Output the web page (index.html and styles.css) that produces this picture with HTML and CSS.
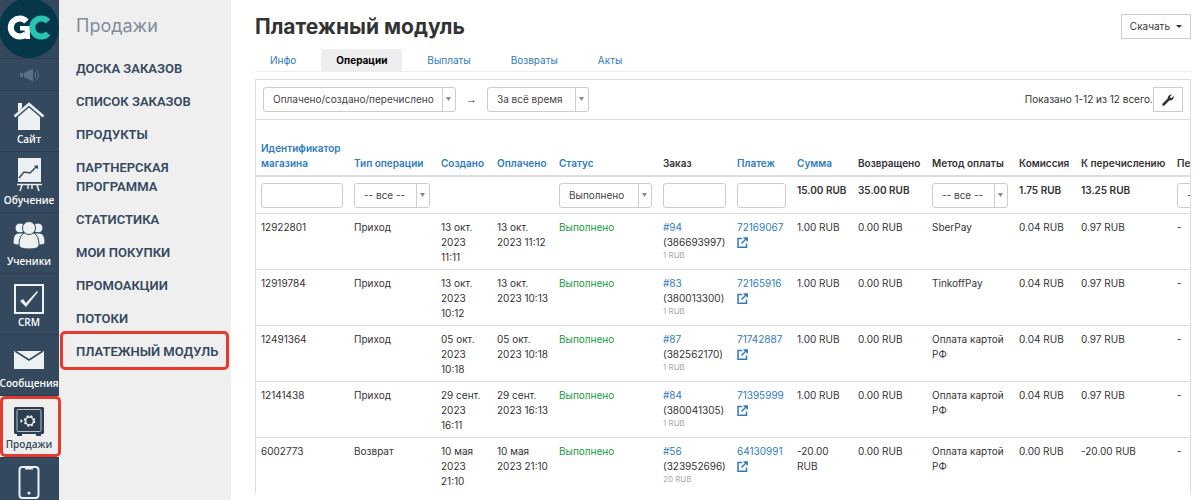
FILE: index.html
```html
<!DOCTYPE html>
<html lang="ru">
<head>
  <meta charset="UTF-8" />
  <meta name="viewport" content="width=device-width, initial-scale=1" />
  <title>Платежный модуль</title>
  <link rel="stylesheet" href="styles.css">
</head>
<body>

  <!-- Left icon bar -->
  <nav class="rail">
    <a href="#" class="rail-logo" aria-label="GC">
      <svg width="59" height="58" viewBox="0 0 59 58" fill="none">
        <circle cx="29" cy="28" r="30" fill="#053649" />
        <path d="M26.500 21.500A9 9 0 1 0 26 34" stroke="#fff" stroke-width="6" />
        <path d="M20 26h10v13h-4.500l-1-8.500H20z" fill="#fff" />
        <path d="M48 21.500A9 9 0 1 0 48 33.500" stroke="#27c4b5" stroke-width="6" />
      </svg>
    </a>
    <a href="#" class="rail-news" aria-label="Новости">
      <svg width="20" height="14" viewBox="0 0 20 14" fill="#5a6f87">
        <path d="M0 5h3v4H0zM4 5l9-4.500v13L4 9z" />
        <path d="M15 4q1.500 3 0 6M17 2q3 5 0 10" fill="none" stroke="#5a6f87" />
      </svg>
    </a>
    <a href="#" class="rail-item">
      <svg width="32" height="30" viewBox="0 0 32 30" fill="#ecf0f1">
        <path d="M5 2h4v5l-4 4z" />
        <path d="M1.500 15.500L16 3l14.500 12.500" fill="none" stroke="#ecf0f1" stroke-width="2.500" />
        <path d="M5 16L16 6.500 27 16v13H5z" />
      </svg>
      <span>Сайт</span>
    </a>
    <a href="#" class="rail-item">
      <svg width="26" height="34" viewBox="0 0 26 34">
        <path d="M2 0h23v24H2z" fill="#ecf0f1" />
        <path d="M3 20l5-6 6 1 7-7" fill="none" stroke="#34495e" stroke-width="1.500" />
        <path d="M18 7.500h4v4z" fill="#34495e" />
        <path d="M1 26.500h25M6 27l-2 6M12 27v4M16 27v4M21 27l2 6" fill="none" stroke="#ecf0f1" stroke-width="1.500" />
      </svg>
      <span>Обучение</span>
    </a>
    <a href="#" class="rail-item">
      <svg width="32" height="32" viewBox="0 0 32 32" fill="#ecf0f1" stroke="#34495e">
        <circle cx="7" cy="7" r="5" />
        <circle cx="25" cy="7" r="5" />
        <path d="M0 21q0-8 5-9h6v12H5q-5 0-5-3zM32 21q0-8-5-9h-6v12h6q5 0 5-3z" />
        <path d="M6 24q0-9 5-12h10q5 3 5 12 0 4-10 4T6 24z" />
        <circle cx="16" cy="7" r="6.500" />
      </svg>
      <span>Ученики</span>
    </a>
    <a href="#" class="rail-item">
      <svg width="30" height="30" viewBox="0 0 30 30" fill="none" stroke="#ecf0f1">
        <path d="M1 1h28v28H1z" stroke-width="2" />
        <path d="M6 17l3-2 3 4 11-12 1 1-12 15z" fill="#ecf0f1" stroke="none" />
      </svg>
      <span>CRM</span>
    </a>
    <a href="#" class="rail-item">
      <svg width="30" height="28" viewBox="0 0 30 28" fill="#ecf0f1">
        <path d="M0 4h30v18H0z" />
        <path d="M1 4l14 9 14-9" fill="none" stroke="#34495e" stroke-width="1.500" />
      </svg>
      <span>Сообщения</span>
    </a>
    <a href="#" class="rail-item active">
      <svg width="30" height="29" viewBox="0 0 30 29">
        <path d="M1 0h28l1 1v25l-1 1h-2v2h-5v-2H8v2H3v-2H1l-1-1V1z" fill="#2c3e50" />
        <rect x="3" y="2.500" width="24" height="22" rx="1" fill="none" stroke="#b5bdc5" />
        <circle cx="15.500" cy="14" r="4" fill="none" stroke="#ecf0f1" stroke-width="1.500" />
        <circle cx="15.500" cy="14" r="5" fill="none" stroke="#ecf0f1" stroke-width="1.500" stroke-dasharray="2 2" />
        <path d="M6.500 12l2.500 2-2.500 2z" fill="#ecf0f1" />
      </svg>
      <span>Продажи</span>
    </a>
    <a href="#" class="rail-item rail-app" aria-label="Приложение">
      <svg width="22" height="34" viewBox="0 0 22 34" fill="none" stroke="#ecf0f1">
        <rect x="1.500" y="1" width="19" height="31" rx="3" stroke-width="2" />
        <path d="M7 2.500h8" stroke-width="2" />
        <circle cx="11" cy="27" r="1.500" fill="#ecf0f1" stroke="none" />
      </svg>
    </a>
  </nav>

  <!-- Section menu -->
  <aside class="submenu">
    <h2>Продажи</h2>
    <a href="#">ДОСКА ЗАКАЗОВ</a>
    <a href="#">СПИСОК ЗАКАЗОВ</a>
    <a href="#">ПРОДУКТЫ</a>
    <a href="#">ПАРТНЕРСКАЯ ПРОГРАММА</a>
    <a href="#">СТАТИСТИКА</a>
    <a href="#">МОИ ПОКУПКИ</a>
    <a href="#">ПРОМОАКЦИИ</a>
    <a href="#">ПОТОКИ</a>
    <a href="#" class="active">ПЛАТЕЖНЫЙ МОДУЛЬ</a>
  </aside>

  <main>
    <header class="page-header">
      <h1>Платежный модуль</h1>
      <button type="button" class="btn">Скачать <span class="caret"></span></button>
    </header>

    <nav class="tabs">
      <a href="#">Инфо</a>
      <a href="#" class="active">Операции</a>
      <a href="#">Выплаты</a>
      <a href="#">Возвраты</a>
      <a href="#">Акты</a>
    </nav>

    <section class="panel">
      <div class="toolbar">
        <select class="select-date" aria-label="Тип даты"><option>Оплачено/создано/перечислено</option></select>
        <span class="arrow">→</span>
        <select class="select-period" aria-label="Период"><option>За всё время</option></select>
        <span class="summary">Показано 1-12 из 12 всего.</span>
        <button type="button" class="btn btn-icon" aria-label="Настройки">
          <svg width="12" height="12" viewBox="0 0 12 12">
            <path d="M1.500 10.500L7 5" stroke="#333" stroke-width="2.500" stroke-linecap="round" />
            <path d="M10 .5L8 2.500l.3 1.300 1.300.3 2-2A3.500 3.500 0 0 1 6.500 6 3.500 3.500 0 0 1 10 .5z" fill="#333" />
          </svg>
        </button>
      </div>

      <div class="grid">
        <table>
          <colgroup>
            <col class="c-shop"><col class="c-type"><col class="c-created"><col class="c-paid">
            <col class="c-status"><col class="c-order"><col class="c-payment"><col class="c-sum">
            <col class="c-refund"><col class="c-method"><col class="c-fee"><col class="c-transfer"><col class="c-date">
          </colgroup>
          <thead>
            <tr>
              <th><a href="#">Идентификатор магазина</a></th>
              <th><a href="#">Тип операции</a></th>
              <th><a href="#">Создано</a></th>
              <th><a href="#">Оплачено</a></th>
              <th><a href="#">Статус</a></th>
              <th>Заказ</th>
              <th><a href="#">Платеж</a></th>
              <th><a href="#">Сумма</a></th>
              <th>Возвращено</th>
              <th>Метод оплаты</th>
              <th>Комиссия</th>
              <th>К перечислению</th>
              <th>Перечислено</th>
            </tr>
            <tr class="filters">
              <td><input type="text" aria-label="Идентификатор магазина"></td>
              <td><select aria-label="Тип операции"><option>-- все --</option></select></td>
              <td></td>
              <td></td>
              <td><select aria-label="Статус"><option>Выполнено</option></select></td>
              <td><input type="text" aria-label="Заказ"></td>
              <td><input type="text" aria-label="Платеж"></td>
              <td>15.00 RUB</td>
              <td>35.00 RUB</td>
              <td><select aria-label="Метод оплаты"><option>-- все --</option></select></td>
              <td>1.75 RUB</td>
              <td>13.25 RUB</td>
              <td><select aria-label="Перечислено"><option>-- все --</option></select></td>
            </tr>
          </thead>
          <tbody id="rows"></tbody>
        </table>
      </div>
    </section>
  </main>

  <script>
    // shop id, type, created, paid, order, order id, order sum, payment, sum, method, fee, transfer
    const operations = [
      ["12922801", "Приход", "13 окт. 2023 11:11", "13 окт. 2023 11:12", "#94", "386693997", "1 RUB", "72169067", "1.00 RUB", "SberPay", "0.04 RUB", "0.97 RUB"],
      ["12919784", "Приход", "13 окт. 2023 10:12", "13 окт. 2023 10:13", "#83", "380013300", "1 RUB", "72165916", "1.00 RUB", "TinkoffPay", "0.04 RUB", "0.97 RUB"],
      ["12491364", "Приход", "05 окт. 2023 10:18", "05 окт. 2023 10:18", "#87", "382562170", "1 RUB", "71742887", "1.00 RUB", "Оплата картой РФ", "0.04 RUB", "0.97 RUB"],
      ["12141438", "Приход", "29 сент. 2023 16:11", "29 сент. 2023 16:13", "#84", "380041305", "1 RUB", "71395999", "1.00 RUB", "Оплата картой РФ", "0.04 RUB", "0.97 RUB"],
      ["6002773", "Возврат", "10 мая 2023 21:10", "10 мая 2023 21:10", "#56", "323952696", "20 RUB", "64130991", "-20.00 RUB", "Оплата картой РФ", "0.00 RUB", "-20.00 RUB"]
    ];

    const external = `<svg width="11" height="11" viewBox="0 0 11 11" fill="none" stroke="#2f7bbf" stroke-width="1.500">
      <path d="M5 1.500H1v8.700h8.500V6.500M4.500 6.500L9.500 1.500M6.500 1h3.700v3.500" /></svg>`;

    // Split a date into lines: day and month, then year and time.
    function date(value, timeBreak) {
      const [day, month, year, time] = value.split(" ");
      return `${day} ${month}<br>${year}${timeBreak}${time}`;
    }

    document.getElementById("rows").innerHTML = operations.map(o => `
      <tr>
        <td>${o[0]}</td>
        <td>${o[1]}</td>
        <td>${date(o[2], "<br>")}</td>
        <td class="nowrap">${date(o[3], " ")}</td>
        <td class="done">Выполнено</td>
        <td><a href="#">${o[4]}</a><br>(${o[5]})<small>${o[6]}</small></td>
        <td><a href="#">${o[7]}</a><br><a href="#" aria-label="Открыть">${external}</a></td>
        <td>${o[8]}</td>
        <td>0.00 RUB</td>
        <td>${o[9]}</td>
        <td>${o[10]}</td>
        <td>${o[11]}</td>
        <td>-</td>
      </tr>`).join("");
  </script>
</body>
</html>
```
FILE: styles.css
```css
* {
  box-sizing: border-box;
}
body {
  display: flex;
  height: 100vh;
  margin: 0;
  overflow: hidden;
  background: #fff;
  color: #333;
  font: 10px/15px Inter, sans-serif;
}
a {
  color: #2f7bbf;
  text-decoration: none;
}
h1, h2 {
  margin: 0;
}

/* Left icon bar */
.rail {
  flex: 0 0 59px;
  display: flex;
  flex-direction: column;
  min-width: 0;
  background: #34495e;
}
.rail a {
  flex-shrink: 0;
  border-bottom: 1px solid #2c3e50;
}
.rail-logo {
  height: 59px;
  overflow: hidden;
}
.rail-logo svg {
  display: block;
}
.rail-news {
  display: flex;
  align-items: center;
  justify-content: center;
  height: 32px;
}
.rail-item {
  display: flex;
  flex-direction: column;
  align-items: center;
  justify-content: flex-end;
  height: 61px;
  padding: 0 1px 4px 0;
  color: #fff;
  font: 600 10px/16px "Open Sans", sans-serif;
}
.rail-item.active {
  position: relative;
  height: 62px;
  padding-bottom: 5px;
  background: #efefef;
  color: #34495e;
}
.rail-item.rail-app {
  justify-content: flex-start;
  padding-top: 8px;
}
/* Red frame over the chosen entries */
.rail-item.active::after,
.submenu .active::after {
  content: "";
  position: absolute;
  z-index: 1;
  inset: 0 -2px 0 0;
  border: 3px solid #e8392f;
  border-radius: 5px;
}

/* Section menu */
.submenu {
  flex: 0 0 172px;
  display: flex;
  flex-direction: column;
  gap: 14px;
  padding: 14px 0 0 17px;
  background: #efefef;
}
.submenu h2 {
  margin-bottom: 7px;
  color: #7f8c9d;
  font-size: 18px;
  font-weight: 400;
  line-height: 24px;
}
.submenu a {
  position: relative;
  color: #34495e;
  font-family: Roboto, sans-serif;
  font-size: 13px;
  font-weight: 600;
  line-height: 19px;
}
.submenu .active::after {
  inset: -11px 2px -9px -16px;
}

/* Content */
main {
  flex: 1;
  display: flex;
  flex-direction: column;
  min-width: 0;
  padding: 14px 9px 7px 24px;
}
.page-header {
  display: flex;
  justify-content: space-between;
  height: 35px;
}
h1 {
  font-size: 21px;
  font-weight: 700;
  line-height: 26px;
}
.btn {
  display: flex;
  align-items: center;
  gap: 6px;
  height: 25px;
  padding: 0 8px;
  border: 1px solid #ccc;
  background: #fff;
  color: #333;
  font: inherit;
}
.caret {
  border: 3px solid transparent;
  border-top-color: #333;
  border-bottom: 0;
}
.tabs {
  display: flex;
  gap: 10px;
  border-bottom: 1px solid #eee;
}
.tabs a {
  padding: 4px 15px 3px;
}
.tabs .active {
  background: #eee;
  color: #000;
  font-weight: 700;
}
.panel {
  flex: 1;
  display: flex;
  flex-direction: column;
  min-height: 0;
  margin-top: 7px;
  border: 1px solid #ddd;
  border-bottom: 0;
}
.toolbar {
  display: flex;
  align-items: center;
  padding: 7px;
  border-bottom: 1px solid #ddd;
}
.arrow {
  margin: 0 10px;
  font-family: "Liberation Sans", sans-serif;
  font-size: 11px;
}
.summary {
  margin-left: auto;
}
.btn-icon {
  padding: 0 8px;
}
select, input {
  width: 100%;
  height: 25px;
  border: 1px solid #ccc;
  border-radius: 3px;
  background-color: #fff;
  color: #444;
  font: inherit;
}
select {
  appearance: none;
  padding: 0 13px 0 9px;
  background-image:
    url("data:image/svg+xml,%3Csvg xmlns='http://www.w3.org/2000/svg' width='5' height='4'%3E%3Cpath d='M0 0h5L2.5 4z' fill='%23888'/%3E%3C/svg%3E"),
    linear-gradient(#ccc, #ccc);
  background-position: right 4px top 9px, right 12px top 0;
  background-size: 5px 4px, 1px 100%;
  background-repeat: no-repeat;
}
.select-date {
  width: 193px;
}
.select-period {
  width: 102px;
}

/* Operations table */
.grid {
  flex: 1;
  overflow: hidden;
}
table {
  width: 100%;
  min-width: 1006px;
  table-layout: fixed;
  border-collapse: collapse;
}
.c-shop { width: 93px; }
.c-type { width: 87px; }
.c-created { width: 56px; }
.c-paid { width: 62px; }
.c-status { width: 104px; }
.c-order { width: 74px; }
.c-payment { width: 60px; }
.c-sum { width: 61px; }
.c-refund { width: 74px; }
.c-method { width: 87px; }
.c-fee { width: 62px; }
.c-transfer { width: 96px; }
.c-date { width: 90px; }
th, td {
  padding: 6px 6px 4px 5px;
  text-align: left;
  vertical-align: top;
}
th {
  height: 56px;
  border-bottom: 2px solid #ddd;
  vertical-align: bottom;
  white-space: nowrap;
  font-weight: 600;
}
th:first-child {
  white-space: normal;
}
td {
  border-bottom: 1px solid #ddd;
}
.filters td {
  height: 37px;
  white-space: nowrap;
  font-weight: 600;
}
.filters input,
.filters select {
  display: block;
  font-weight: 400;
}
.nowrap {
  white-space: nowrap;
}
.done {
  color: #159a3c;
}
td svg {
  vertical-align: middle;
}
small {
  display: block;
  color: #aaa;
  font-size: 8px;
  line-height: 10px;
}
```
